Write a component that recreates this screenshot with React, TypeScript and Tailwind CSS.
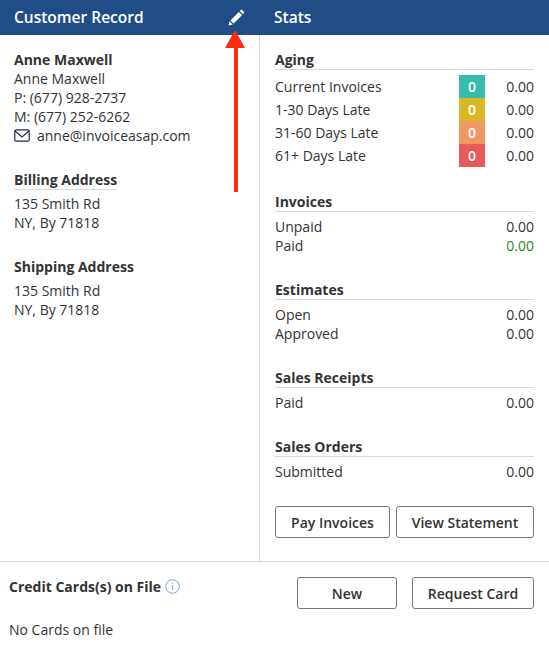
const font = { fontFamily: '"Open Sans", sans-serif' };

function Section({ title, className, children }: { title: string; className?: string; children: React.ReactNode }) {
  return (
    <div className={className}>
      <div className="h-[19px] border-b border-[#d9d9d9] font-bold leading-[18px] text-[#333]">{title}</div>
      <div className="mt-[5px]">{children}</div>
    </div>
  );
}

function Row({ label, value, green }: { label: string; value: string; green?: boolean }) {
  return (
    <div className="flex h-[19px] items-center justify-between leading-[19px]">
      <span>{label}</span>
      <span className={green ? "text-[#1e8a1e]" : ""}>{value}</span>
    </div>
  );
}

function AgeRow({ label, color }: { label: string; color: string }) {
  return (
    <div className="flex h-[23px] items-center leading-[23px]">
      <span className="flex-1">{label}</span>
      <span className={`w-[26px] text-center font-semibold text-white ${color}`}>0</span>
      <span className="w-[49px] text-right">0.00</span>
    </div>
  );
}

function Btn({ label, className }: { label: string; className: string }) {
  return (
    <button className={`h-[32px] rounded-[3px] border border-[#777] bg-white text-center font-semibold text-[#333] ${className}`}>
      {label}
    </button>
  );
}

export default function App() {
  return (
    <div className="relative h-[648px] w-[549px] overflow-hidden bg-white text-[14px] text-[#333]" style={font}>
      <div className="flex h-[35px] items-center bg-[#1f4e87] text-[15.5px] font-semibold text-white">
        <div className="flex w-[260px] items-center justify-between pl-[14px] pr-[15px]">
          <span>Customer Record</span>
          <svg width="18" height="18" viewBox="0 0 18 18" fill="#fff">
            <path d="M1.5 16.5 L2.6 12.2 L5.8 15.4 Z" />
            <path d="M3.4 11.4 L11.8 3 L15 6.2 L6.6 14.6 Z" />
            <path d="M12.7 2.1 L13.9 0.9 Q14.5 0.4 15.1 0.9 L17 2.8 Q17.5 3.4 17 4 L15.8 5.3 Z" />
          </svg>
        </div>
        <div className="pl-[14px]">Stats</div>
      </div>
      <div className="flex h-[527px] border-b border-[#d9d9d9]">
        <div className="w-[260px] border-r border-[#d9d9d9]">
          <div className="pl-[14px] pt-[15px] leading-[19px]">
            <div className="font-bold">Anne Maxwell</div>
            <div>Anne Maxwell</div>
            <div>P: (677) 928-2737</div>
            <div>M: (677) 252-6262</div>
            <div className="flex items-center">
              <svg width="16" height="13" viewBox="0 0 16 13" fill="none" stroke="#1f2a44" strokeWidth="1.2" className="mr-[7px]">
                <rect x="0.8" y="0.8" width="14.4" height="11.4" rx="1.5" />
                <path d="M1 2 L8 8 L15 2" />
              </svg>
              anne@invoiceasap.com
            </div>
            <div className="mt-[26px] inline-block border-b border-[#d9d9d9] font-bold leading-[18px]">Billing Address</div>
            <div className="mt-[4px]">135 Smith Rd</div>
            <div>NY, By 71818</div>
            <div className="mt-[25px] font-bold">Shipping Address</div>
            <div className="mt-[5px]">135 Smith Rd</div>
            <div>NY, By 71818</div>
          </div>
        </div>
        <div className="flex-1">
          <div className="pl-[15px] pr-[15px] pt-[16px]">
            <Section title="Aging">
              <AgeRow label="Current Invoices" color="bg-[#33bdaa]" />
              <AgeRow label="1-30 Days Late" color="bg-[#d9b826]" />
              <AgeRow label="31-60 Days Late" color="bg-[#ee9866]" />
              <AgeRow label="61+ Days Late" color="bg-[#e85a5a]" />
            </Section>
            <Section title="Invoices" className="mt-[26px]">
              <Row label="Unpaid" value="0.00" />
              <Row label="Paid" value="0.00" green />
            </Section>
            <Section title="Estimates" className="mt-[26px]">
              <Row label="Open" value="0.00" />
              <Row label="Approved" value="0.00" />
            </Section>
            <Section title="Sales Receipts" className="mt-[26px]">
              <Row label="Paid" value="0.00" />
            </Section>
            <Section title="Sales Orders" className="mt-[26px]">
              <Row label="Submitted" value="0.00" />
            </Section>
            <div className="mt-[25px] flex justify-between">
              <Btn label="Pay Invoices" className="w-[115px]" />
              <Btn label="View Statement" className="w-[138px]" />
            </div>
          </div>
        </div>
      </div>
      <div className="flex items-start justify-between pl-[9px] pr-[15px] pt-[15px]">
        <div className="flex items-center font-bold leading-[19px]">
          Credit Cards(s) on File
          <svg width="15" height="15" viewBox="0 0 15 15" fill="none" stroke="#6f97d0" strokeWidth="0.9" className="ml-[4px]">
            <circle cx="7.5" cy="7.5" r="6.8" />
            <path d="M7.5 6.5 V11 M7.5 3.8 V4.9" />
          </svg>
        </div>
        <div className="flex gap-[15px]">
          <Btn label="New" className="w-[100px]" />
          <Btn label="Request Card" className="w-[122px]" />
        </div>
      </div>
      <div className="pl-[9px] pt-[11px] leading-[19px]">No Cards on file</div>
      <svg className="absolute left-[225px] top-[30px]" width="20" height="162" viewBox="0 0 20 162">
        <path d="M10 0 L20 18 L0 18 Z M9 18 H13 V162 H9 Z" fill="#fc2a10" />
      </svg>
    </div>
  );
}
